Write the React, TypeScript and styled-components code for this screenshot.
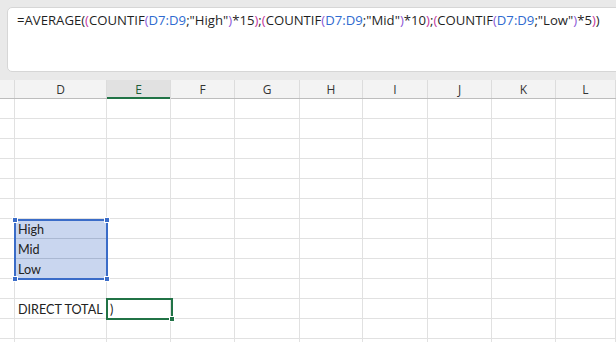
import * as React from 'react';
import styled, { createGlobalStyle } from 'styled-components';

const GlobalStyle = createGlobalStyle`
  html, body {
    margin: 0;
    padding: 0;
    background: #ffffff;
    overflow: hidden;
  }
  * {
    box-sizing: border-box;
  }
`;

const COLS = [
  { name: '', width: 15 },
  { name: 'D', width: 92 },
  { name: 'E', width: 64 },
  { name: 'F', width: 64 },
  { name: 'G', width: 65 },
  { name: 'H', width: 63 },
  { name: 'I', width: 65 },
  { name: 'J', width: 64 },
  { name: 'K', width: 64 },
  { name: 'L', width: 60 },
];

const ROW_COUNT = 13;

const cellText: Record<string, string> = {
  '6-1': 'High',
  '7-1': 'Mid',
  '8-1': 'Low',
  '10-1': 'DIRECT TOTAL',
  '10-2': ')',
};

const isSelected = (r: number, c: number) => c === 1 && r >= 6 && r <= 8;

const Page = styled.div`
  width: 616px;
  height: 342px;
  overflow: hidden;
  display: flex;
  flex-direction: column;
  font-family: 'Lato', 'Liberation Sans', sans-serif;
`;

const FormulaArea = styled.div`
  flex: none;
  background: #e9e9e9;
  padding: 7px 0 8px 7px;
  height: 80px;
  display: flex;
`;

const FormulaBox = styled.div`
  flex: 1;
  margin-right: -8px;
  background: #ffffff;
  border: 1px solid #d6d6d6;
  border-radius: 5px;
  padding: 3px 0 0 9px;
  font-family: 'Open Sans', 'Noto Sans', sans-serif;
  font-size: 13.15px;
  color: #1f1f1f;
  white-space: nowrap;
`;

const Token = styled.span<{ $c: string }>`
  color: ${(p) => p.$c};
`;

const Sheet = styled.div`
  position: relative;
  flex: none;
`;

const HeaderRow = styled.div`
  display: flex;
  height: 19px;
  background: #f3f3f3;
  border-bottom: 1px solid #bdbdbd;
`;

const ColHeader = styled.div<{ $w: number; $active?: boolean }>`
  width: ${(p) => p.$w}px;
  flex: none;
  display: flex;
  align-items: center;
  justify-content: center;
  font-family: 'Open Sans', 'Noto Sans', sans-serif;
  font-size: 12px;
  color: ${(p) => (p.$active ? '#1d5c38' : '#333333')};
  border-right: 1px solid #dcdcdc;
  background: ${(p) => (p.$active ? '#e1e1e1' : 'transparent')};
  box-shadow: ${(p) => (p.$active ? 'inset 0 -2px 0 #217346' : 'none')};
  margin-bottom: ${(p) => (p.$active ? '-1px' : '0')};
`;

const Row = styled.div`
  display: flex;
  height: 20px;
`;

const Cell = styled.div<{ $w: number; $sel?: boolean }>`
  width: ${(p) => p.$w}px;
  flex: none;
  border-right: 1px solid #e1e1e1;
  border-bottom: 1px solid ${(p) => (p.$sel ? '#aab8d2' : '#e1e1e1')};
  background: ${(p) => (p.$sel ? '#c9d6ef' : '#ffffff')};
  font-size: 12.6px;
  color: #222222;
  line-height: 21px;
  padding-left: 3px;
  white-space: nowrap;
`;

const Selection = styled.div`
  position: absolute;
  left: 14px;
  top: 139px;
  width: 94px;
  height: 61px;
  border: 2px solid #3a6cc8;
  pointer-events: none;
`;

const Handle = styled.div<{ $x: 'l' | 'r'; $y: 't' | 'b' }>`
  position: absolute;
  width: 6px;
  height: 6px;
  background: #3a6cc8;
  border: 1px solid #ffffff;
  ${(p) => (p.$x === 'l' ? 'left: -4px;' : 'right: -4px;')}
  ${(p) => (p.$y === 't' ? 'top: -4px;' : 'bottom: -4px;')}
`;

const ActiveCell = styled.div`
  position: absolute;
  left: 106px;
  top: 218px;
  width: 67px;
  height: 22px;
  border: 2px solid #217346;
  pointer-events: none;
`;

const FillHandle = styled.div`
  position: absolute;
  right: -4px;
  bottom: -4px;
  width: 6px;
  height: 6px;
  background: #217346;
  border: 1px solid #ffffff;
`;

const BLACK = '#1f1f1f';
const PINK = '#c2379e';
const PURPLE = '#8d5ad6';
const BLUE = '#2f6bd0';

const group = (crit: string, mult: string) => [
  { t: '(', c: PINK },
  { t: 'COUNTIF', c: BLACK },
  { t: '(', c: PURPLE },
  { t: 'D7:D9', c: BLUE },
  { t: `;"${crit}"`, c: BLACK },
  { t: ')', c: PURPLE },
  { t: `*${mult}`, c: BLACK },
  { t: ')', c: PINK },
];

const formula = [
  { t: '=AVERAGE(', c: BLACK },
  ...group('High', '15'),
  { t: ';', c: BLACK },
  ...group('Mid', '10'),
  { t: ';', c: BLACK },
  ...group('Low', '5'),
  { t: ')', c: BLACK },
];

const App: React.FunctionComponent = () => {
  return (
    <Page>
      <GlobalStyle />
      <FormulaArea>
        <FormulaBox>
          {formula.map((f, i) => (
            <Token key={i} $c={f.c}>
              {f.t}
            </Token>
          ))}
        </FormulaBox>
      </FormulaArea>
      <Sheet>
        <HeaderRow>
          {COLS.map((c) => (
            <ColHeader key={c.name || 'corner'} $w={c.width} $active={c.name === 'E'}>
              {c.name}
            </ColHeader>
          ))}
        </HeaderRow>
        {Array.from({ length: ROW_COUNT }).map((_, r) => (
          <Row key={r}>
            {COLS.map((c, ci) => (
              <Cell key={ci} $w={c.width} $sel={isSelected(r, ci)}>
                {cellText[`${r}-${ci}`]}
              </Cell>
            ))}
          </Row>
        ))}
        <Selection>
          <Handle $x="l" $y="t" />
          <Handle $x="r" $y="t" />
          <Handle $x="l" $y="b" />
          <Handle $x="r" $y="b" />
        </Selection>
        <ActiveCell>
          <FillHandle />
        </ActiveCell>
      </Sheet>
    </Page>
  );
};

export default App;
